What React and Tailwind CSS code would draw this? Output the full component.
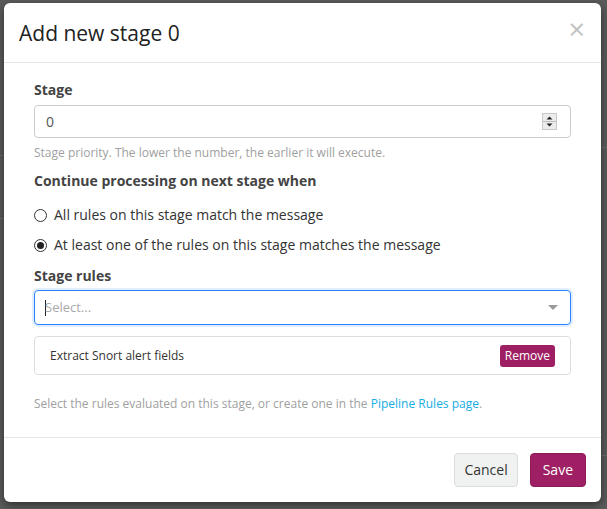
import React from "react";

export default function App() {
  const font = { fontFamily: '"Open Sans", "Noto Sans", sans-serif' };
  return (
    <div className="relative w-[607px] h-[509px] bg-[#5b5b5b] overflow-hidden" style={font}>
      {/* dimmed page behind */}
      <div className="absolute left-0 top-[155px] w-[4px] h-px bg-[#6e6e6e]" />
      <div className="absolute left-0 top-[218px] w-[4px] h-px bg-[#6e6e6e]" />
      <div className="absolute right-0 top-[147px] w-[6px] h-px bg-[#6e6e6e]" />
      <div className="absolute right-0 top-[455px] w-[6px] h-px bg-[#6e6e6e]" />

      <div className="absolute left-[4px] top-[3px] w-[597px] h-[499px] bg-white rounded-[6px] shadow-[0_3px_9px_rgba(0,0,0,0.5)] flex flex-col">
        {/* header */}
        <div className="h-[60px] border-b border-[#e5e5e5] flex items-center justify-between pl-[15px] pr-[15px]">
          <h4 className="text-[21px] text-[#222] leading-none mt-[1px]">Add new stage 0</h4>
          <span className="text-[29px] leading-none text-[#c2c2c2] mr-[1px] -mt-[8px]">×</span>
        </div>

        {/* body */}
        <div className="flex-1 px-[30px] pt-[17px] text-[14px] text-[#333]">
          <div className="font-bold text-[14px] leading-[20px] text-[#444]">Stage</div>
          <div className="mt-[5px] h-[33px] border border-[#ccc] rounded-[4px] flex items-center justify-between pl-[11px] pr-[13px]">
            <span className="text-[14px] text-[#555]">0</span>
            <svg width="15" height="17" viewBox="0 0 15 17">
              <rect x="0.5" y="0.5" width="14" height="16" fill="#ececec" stroke="#c9c9c9" />
              <line x1="1" y1="8.5" x2="14" y2="8.5" stroke="#bdbdbd" />
              <path d="M4.5 6.5 L7.5 3.5 L10.5 6.5 Z" fill="#222" />
              <path d="M4.5 10.5 L7.5 13.5 L10.5 10.5 Z" fill="#222" />
            </svg>
          </div>
          <div className="mt-[6px] text-[12px] leading-[17px] text-[#a0a0a0]">
            Stage priority. The lower the number, the earlier it will execute.
          </div>

          <div className="mt-[10px] font-bold text-[14px] leading-[20px] text-[#444]">
            Continue processing on next stage when
          </div>
          <div className="mt-[14px] flex items-center h-[20px]">
            <span className="w-[13px] h-[13px] rounded-full border border-[#333] bg-white" />
            <span className="ml-[7px] leading-[20px]">All rules on this stage match the message</span>
          </div>
          <div className="mt-[10px] flex items-center h-[20px]">
            <span className="w-[13px] h-[13px] rounded-full border border-[#333] bg-white flex items-center justify-center">
              <span className="w-[7px] h-[7px] rounded-full bg-[#222]" />
            </span>
            <span className="ml-[7px] leading-[20px]">At least one of the rules on this stage matches the message</span>
          </div>

          <div className="mt-[11px] font-bold text-[14px] leading-[20px] text-[#444]">Stage rules</div>
          <div className="mt-[4px] h-[35px] border border-[#2684ff] rounded-[4px] shadow-[0_0_0_2px_#e3efff] flex items-center justify-between pl-[10px] pr-[12px]">
            <span className="flex items-center text-[13px] text-[#aaa]">
              <span className="w-px h-[16px] bg-[#222] -mr-[1px]" />
              <span>Select...</span>
            </span>
            <svg width="10" height="6" viewBox="0 0 10 6">
              <path d="M0 0 L10 0 L5 5 Z" fill="#999" />
            </svg>
          </div>

          <div className="mt-[11px] h-[39px] border border-[#ddd] rounded-[4px] flex items-center justify-between pl-[15px] pr-[15px]">
            <span className="text-[12px] text-[#333]">Extract Snort alert fields</span>
            <span className="h-[22px] px-[5px] rounded-[3px] bg-[#9e1f63] text-white text-[12px] flex items-center">Remove</span>
          </div>

          <div className="mt-[20px] text-[12px] leading-[17px] text-[#a0a0a0]">
            Select the rules evaluated on this stage, or create one in the{" "}
            <span className="text-[#16ace3]">Pipeline Rules page</span>.
          </div>
        </div>

        {/* footer */}
        <div className="h-[65px] border-t border-[#e5e5e5] flex items-center justify-end gap-[12px] pr-[15px] pb-[1px]">
          <button className="h-[34px] px-[9px] rounded-[4px] bg-[#f0f1f1] border border-[#dcdcdc] text-[14px] text-[#333]">Cancel</button>
          <button className="h-[34px] px-[12px] rounded-[4px] bg-[#9e1f63] border border-[#8c1b58] text-[14px] text-white">Save</button>
        </div>
      </div>
    </div>
  );
}
